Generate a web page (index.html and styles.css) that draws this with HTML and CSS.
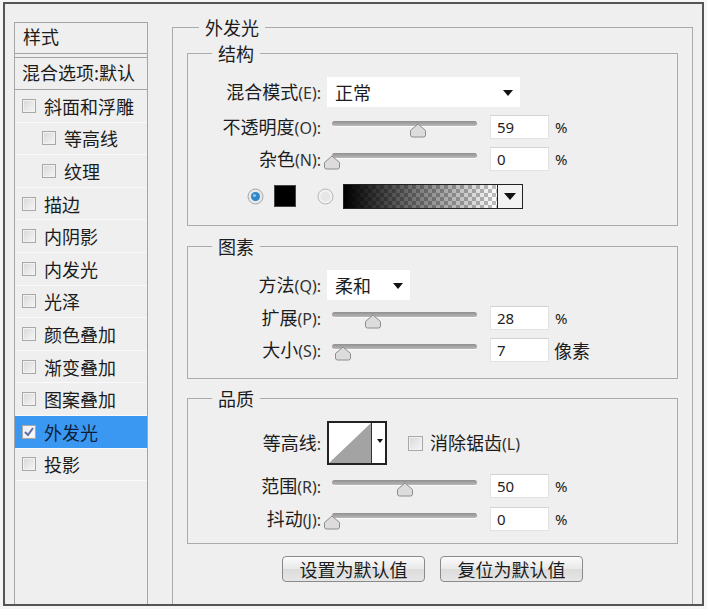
FILE: index.html
```html
<!DOCTYPE html>
<html lang="zh-CN">
<head>
    <meta charset="UTF-8">
    <title>图层样式 - 外发光</title>
    <link rel="stylesheet" href="styles.css">
</head>
<body>
    <div class="dialog">
        <aside class="styles-list">
            <div class="list-head">样式</div>
            <div class="list-blend">混合选项:默认</div>
            <ul class="fx-list">
                <li><span class="check"></span>斜面和浮雕</li>
                <li class="sub"><span class="check"></span>等高线</li>
                <li class="sub"><span class="check"></span>纹理</li>
                <li><span class="check"></span>描边</li>
                <li><span class="check"></span>内阴影</li>
                <li><span class="check"></span>内发光</li>
                <li><span class="check"></span>光泽</li>
                <li><span class="check"></span>颜色叠加</li>
                <li><span class="check"></span>渐变叠加</li>
                <li><span class="check"></span>图案叠加</li>
                <li class="active"><span class="check on"><svg width="12" height="12" viewBox="0 0 12 12"><path d="M2 6 L5 9 L10 2" fill="none" stroke="#5a6fa8" stroke-width="2"/></svg></span>外发光</li>
                <li><span class="check"></span>投影</li>
            </ul>
        </aside>

        <section class="panel">
            <div class="panel-title">外发光</div>

            <div class="group g-structure">
                <div class="group-title">结构</div>
                <div class="row r-blend">
                    <label class="label">混合模式<span class="key">(E):</span></label>
                    <div class="select wide">正常<span class="arrow"></span></div>
                </div>
                <div class="row r-opacity">
                    <label class="label">不透明度<span class="key">(O):</span></label>
                    <div class="slider"><div class="track"><svg class="thumb" style="left: 59%" width="18" height="15" viewBox="0 0 18 15"><path d="M9 1 L16.5 7.5 L16.5 12 Q16.5 14 14.5 14 L3.5 14 Q1.5 14 1.5 12 L1.5 7.5 Z" fill="#dcdcdc" stroke="#8c8c8c"/></svg></div></div>
                    <div class="num">59</div><span class="unit">%</span>
                </div>
                <div class="row">
                    <label class="label">杂色<span class="key">(N):</span></label>
                    <div class="slider"><div class="track"><svg class="thumb" style="left: 0%" width="18" height="15" viewBox="0 0 18 15"><path d="M9 1 L16.5 7.5 L16.5 12 Q16.5 14 14.5 14 L3.5 14 Q1.5 14 1.5 12 L1.5 7.5 Z" fill="#dcdcdc" stroke="#8c8c8c"/></svg></div></div>
                    <div class="num">0</div><span class="unit">%</span>
                </div>
                <div class="row r-color">
                    <svg class="radio" width="17" height="17" viewBox="0 0 17 17"><circle cx="8.5" cy="8.5" r="7.5" fill="#e8e8e8" stroke="#a6a6a6"/><circle cx="8.5" cy="8.5" r="4.5" fill="#2f86c8"/><circle cx="7.5" cy="7.5" r="1.6" fill="#8cc8f0"/></svg>
                    <span class="swatch"></span>
                    <svg class="radio off" width="17" height="17" viewBox="0 0 17 17"><circle cx="8.5" cy="8.5" r="7.5" fill="#f2f2f2" stroke="#b4b4b4"/><circle cx="8.5" cy="8.5" r="5" fill="#e6e6e6"/></svg>
                    <div class="gradient"><span class="ramp"></span><span class="drop"><span class="arrow"></span></span></div>
                </div>
            </div>

            <div class="group g-elements">
                <div class="group-title">图素</div>
                <div class="row r-method">
                    <label class="label">方法<span class="key">(Q):</span></label>
                    <div class="select narrow">柔和<span class="arrow"></span></div>
                </div>
                <div class="row r-spread">
                    <label class="label">扩展<span class="key">(P):</span></label>
                    <div class="slider"><div class="track"><svg class="thumb" style="left: 28%" width="18" height="15" viewBox="0 0 18 15"><path d="M9 1 L16.5 7.5 L16.5 12 Q16.5 14 14.5 14 L3.5 14 Q1.5 14 1.5 12 L1.5 7.5 Z" fill="#dcdcdc" stroke="#8c8c8c"/></svg></div></div>
                    <div class="num">28</div><span class="unit">%</span>
                </div>
                <div class="row">
                    <label class="label">大小<span class="key">(S):</span></label>
                    <div class="slider"><div class="track"><svg class="thumb" style="left: 7.5%" width="18" height="15" viewBox="0 0 18 15"><path d="M9 1 L16.5 7.5 L16.5 12 Q16.5 14 14.5 14 L3.5 14 Q1.5 14 1.5 12 L1.5 7.5 Z" fill="#dcdcdc" stroke="#8c8c8c"/></svg></div></div>
                    <div class="num">7</div><span class="unit cjk">像素</span>
                </div>
            </div>

            <div class="group g-quality">
                <div class="group-title">品质</div>
                <div class="row r-contour">
                    <label class="label">等高线<span class="key">:</span></label>
                    <div class="contour">
                        <svg class="curve" width="42" height="40" viewBox="0 0 42 40"><rect width="42" height="40" fill="#fff"/><polygon points="0,40 42,0 42,40" fill="#a3a3a3"/></svg>
                        <span class="mini-drop"></span>
                    </div>
                    <span class="check aa"></span><span class="aa-text">消除锯齿<span class="key">(L)</span></span>
                </div>
                <div class="row r-range">
                    <label class="label">范围<span class="key">(R):</span></label>
                    <div class="slider"><div class="track"><svg class="thumb" style="left: 50%" width="18" height="15" viewBox="0 0 18 15"><path d="M9 1 L16.5 7.5 L16.5 12 Q16.5 14 14.5 14 L3.5 14 Q1.5 14 1.5 12 L1.5 7.5 Z" fill="#dcdcdc" stroke="#8c8c8c"/></svg></div></div>
                    <div class="num">50</div><span class="unit">%</span>
                </div>
                <div class="row r-jitter">
                    <label class="label">抖动<span class="key">(J):</span></label>
                    <div class="slider"><div class="track"><svg class="thumb" style="left: 0%" width="18" height="15" viewBox="0 0 18 15"><path d="M9 1 L16.5 7.5 L16.5 12 Q16.5 14 14.5 14 L3.5 14 Q1.5 14 1.5 12 L1.5 7.5 Z" fill="#dcdcdc" stroke="#8c8c8c"/></svg></div></div>
                    <div class="num">0</div><span class="unit">%</span>
                </div>
            </div>

            <div class="buttons">
                <button class="btn">设置为默认值</button>
                <button class="btn">复位为默认值</button>
            </div>
        </section>
    </div>
</body>
</html>
```

FILE: styles.css
```css
body {
    margin: 0;
    padding: 2px 0 0 3px;
    background: #f6f6f6;
    font-family: "Noto Sans CJK SC", sans-serif;
    font-size: 18px;
    color: #1c1c1c;
}

.dialog {
    display: flex;
    width: 701px;
    height: 604px;
    box-sizing: border-box;
    border: 2px solid #555;
    background: #efefef;
    overflow: hidden;
}

/* left styles list */
.styles-list {
    width: 134px;
    margin: 18px 0 0 9px;
    box-sizing: border-box;
    border: 1px solid #a5a5a5;
    border-bottom: none;
    flex-shrink: 0;
}

.list-head {
    height: 30px;
    line-height: 26px;
    padding-left: 8px;
    border-bottom: 1px solid #a5a5a5;
}

.list-blend {
    height: 31px;
    line-height: 28px;
    margin-top: 3px;
    padding-left: 7px;
    border-top: 1px solid #a5a5a5;
    border-bottom: 1px solid #a5a5a5;
    white-space: nowrap;
}

.fx-list {
    list-style: none;
    margin: 0;
    padding: 0;
}

.fx-list li {
    display: flex;
    align-items: center;
    height: 32.6px;
    box-sizing: border-box;
    padding-left: 7px;
    border-bottom: 1px solid #fafafa;
}

.fx-list li.sub {
    padding-left: 27px;
}

.fx-list li.active {
    background: #3b98f2;
    color: #0e1f3a;
}

.check {
    display: inline-flex;
    align-items: center;
    justify-content: center;
    width: 14px;
    height: 14px;
    box-sizing: border-box;
    margin-right: 8px;
    border: 1px solid #a8a8a8;
    background: linear-gradient(135deg, #d8d8d8, #f6f6f6);
    box-shadow: inset 0 0 0 1px #f2f2f2;
}

.check.on {
    background: linear-gradient(135deg, #e8ecf4, #ffffff);
}

/* right panel */
.panel {
    width: 521px;
    margin: 23px 0 0 24px;
    box-sizing: border-box;
    border: 1px solid #ababab;
    border-bottom: none;
    flex-shrink: 0;
}

.panel-title,
.group-title {
    width: fit-content;
    height: 20px;
    line-height: 20px;
    padding: 0 6px;
    margin-top: -11px;
    background: #efefef;
}

.panel-title {
    margin-left: 26px;
}

.group {
    margin: 16px 14px 0;
    border: 1px solid #ababab;
}

.group-title {
    margin-left: 24px;
}

.g-structure { padding-bottom: 13px; }
.g-elements { margin-top: 20px; padding-bottom: 12px; }
.g-quality { margin-top: 19px; padding-bottom: 8px; }

.row {
    display: flex;
    align-items: center;
    height: 32px;
}

.r-blend,
.r-method { height: 30px; margin-top: 14px; }
.r-opacity { margin-top: 4px; }
.r-color { margin-top: 5px; padding-left: 59px; }
.r-spread { margin-top: 2px; }
.r-contour { height: 44px; margin-top: 13px; }
.r-range { margin-top: 5px; }
.r-jitter { margin-top: 1px; }

.label {
    width: 133px;
    margin-right: 6px;
    text-align: right;
    white-space: nowrap;
    line-height: 20px;
}

.key {
    font-family: "Noto Sans", sans-serif;
    font-size: 16px;
    color: #333;
}

.select {
    position: relative;
    height: 30px;
    line-height: 30px;
    padding-left: 8px;
    box-sizing: border-box;
    background: #fff;
}

.select.wide { width: 193px; }
.select.narrow { width: 83px; }

.arrow {
    position: absolute;
    right: 7px;
    top: 13px;
    width: 0;
    height: 0;
    border-left: 5px solid transparent;
    border-right: 5px solid transparent;
    border-top: 6px solid #111;
}

.slider {
    width: 155px;
    height: 20px;
}

.track {
    position: relative;
    margin: 4px 5px 0;
    height: 5px;
    border-radius: 3px;
    background: linear-gradient(#8f8f8f, #b9b9b9);
    box-shadow: 0 1px 0 #fafafa;
}

.thumb {
    position: absolute;
    top: 2px;
    margin-left: -9px;
}

.num {
    width: 59px;
    height: 24px;
    margin-left: 8px;
    box-sizing: border-box;
    padding-left: 6px;
    background: #fff;
    border: 1px solid #e2e2e2;
    border-top-color: #d2d2d2;
    font-family: "Noto Sans", sans-serif;
    font-size: 15px;
    line-height: 22px;
    color: #222;
}

.unit {
    margin-left: 6px;
    font-family: "Noto Sans", sans-serif;
    font-size: 15px;
}

.unit.cjk {
    margin-left: 5px;
    font-family: "Noto Sans CJK SC", sans-serif;
    font-size: 18px;
}

.swatch {
    width: 22px;
    height: 22px;
    margin: 0 21px 0 10px;
    box-sizing: border-box;
    background: #000;
    border: 1px solid #444;
}

.gradient {
    display: flex;
    width: 180px;
    height: 25px;
    margin-left: 9px;
    box-sizing: border-box;
    border: 1px solid #222;
}

.ramp {
    flex: 1;
    background:
        linear-gradient(to right, #000, rgba(0, 0, 0, 0)),
        repeating-conic-gradient(#bdbdbd 0 25%, #fff 0 50%) 0 0 / 8px 8px;
}

.drop {
    position: relative;
    width: 24px;
    border-left: 1px solid #222;
    background: #f2f2f2;
}

.drop .arrow {
    right: 6px;
    top: 8px;
    border-left-width: 6px;
    border-right-width: 6px;
    border-top-width: 7px;
}

.contour {
    display: flex;
    width: 60px;
    height: 44px;
    box-sizing: border-box;
    border: 2px solid #222;
    background: #fff;
}

.curve {
    display: block;
}

.mini-drop {
    position: relative;
    flex: 1;
    border-left: 1px solid #333;
}

.mini-drop::after {
    content: "";
    position: absolute;
    left: 5px;
    top: 16px;
    border-left: 3px solid transparent;
    border-right: 3px solid transparent;
    border-top: 4px solid #111;
}

.check.aa {
    width: 15px;
    height: 15px;
    margin: 0 7px 0 21px;
}

.aa-text {
    line-height: 20px;
}

.buttons {
    display: flex;
    justify-content: center;
    gap: 15px;
    margin-top: 12px;
}

.btn {
    width: 143px;
    height: 26px;
    padding: 0;
    border: 1px solid #8a8a8a;
    border-radius: 4px;
    background: linear-gradient(#fbfbfb, #e9e9e9 50%, #dcdcdc 51%, #e6e6e6);
    font-family: "Noto Sans CJK SC", sans-serif;
    font-size: 18px;
    line-height: 24px;
    color: #1c1c1c;
}
```
